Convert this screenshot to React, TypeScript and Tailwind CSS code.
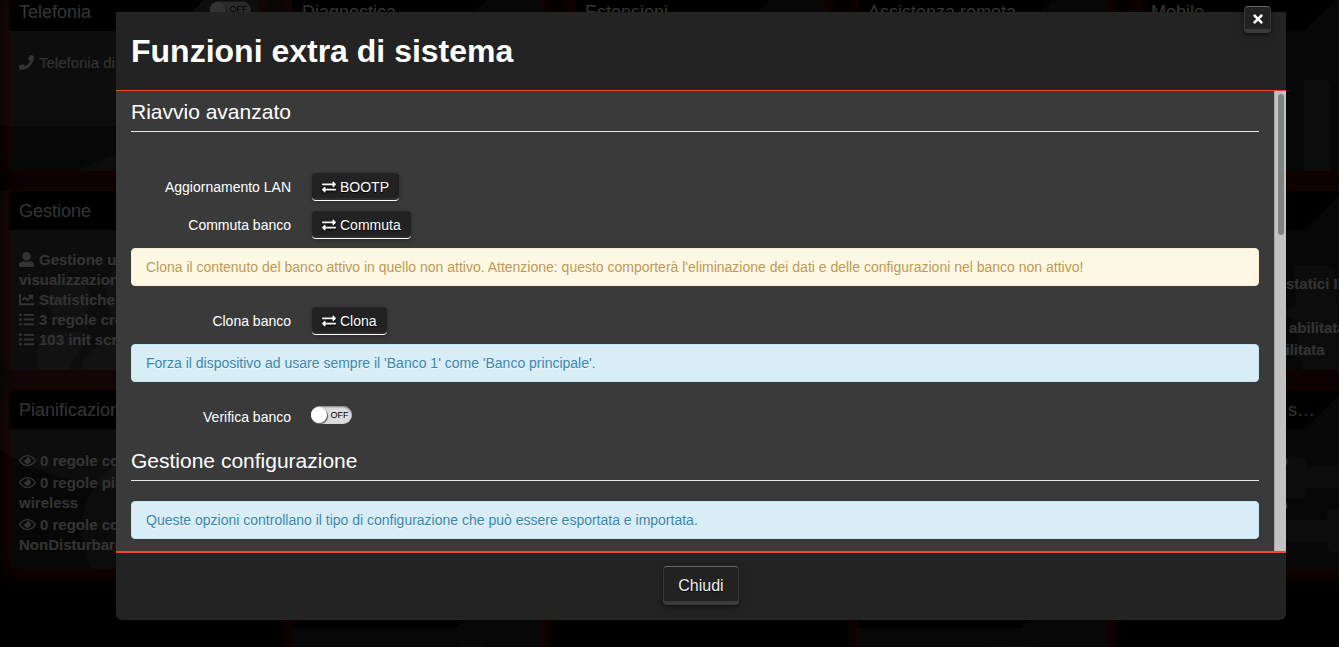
import { useState } from "react";
import type { ReactNode } from "react";
import type { IconType } from "react-icons";
import {
  FaChartLine,
  FaClock,
  FaDatabase,
  FaExchangeAlt,
  FaKey,
  FaListUl,
  FaPhone,
  FaRegEye,
  FaSignal,
  FaSlidersH,
  FaTimes,
  FaUserAlt,
  FaUsers,
} from "react-icons/fa";

type CardItem = {
  icon?: IconType
  text: string
  className?: string
}

type CardData = {
  title: string
  watermark?: IconType | typeof NetworkShape
  wide?: boolean
  toggle?: boolean
  items?: CardItem[]
  listClass?: string
}

function NetworkShape({ className }: { className?: string }) {
  return (
    <svg className={className} viewBox="0 0 211 169" fill="currentColor">
      <path d="M124 18H153Q165 18 167 32L171 169H135L133 117Q132 109 124 109H100V99H120Q129 99 129 91L128 79Q127 71 119 71H100V61H119Q127 61 127 53z" />
    </svg>
  )
}

// null keeps the cell empty
const cards: (CardData | null)[] = [
  {
    title: 'Telefonia',
    watermark: FaPhone,
    toggle: true,
    items: [{ icon: FaPhone, text: 'Telefonia disab.' }],
    listClass: 'pt-[22px]',
  },
  { title: 'Diagnostica' },
  { title: 'Estensioni' },
  { title: 'Assistenza remota' },
  { title: 'Mobile', watermark: FaSignal, wide: true },
  {
    title: 'Gestione',
    watermark: FaUsers,
    wide: true,
    items: [
      { icon: FaUserAlt, text: 'Gestione utenti e visualizzazione' },
      { icon: FaChartLine, text: 'Statistiche' },
      { icon: FaListUl, text: '3 regole cron' },
      { icon: FaListUl, text: '103 init script' },
    ],
    listClass: 'pt-5 font-bold',
  },
  { title: '' },
  { title: '' },
  { title: '' },
  {
    title: '',
    watermark: NetworkShape,
    wide: true,
    items: [
      { text: 'statici IP', className: 'pl-[135px]' },
      { text: 'abilitata', className: 'pl-[138px] mt-6' },
      { text: 'abilitata', className: 'pl-[117px] mt-0.5' },
    ],
    listClass: 'pt-11 font-bold whitespace-nowrap',
  },
  {
    title: 'Pianificazione',
    watermark: FaClock,
    items: [
      { icon: FaRegEye, text: '0 regole cond.' },
      { icon: FaRegEye, text: '0 regole pian. wireless' },
      { icon: FaRegEye, text: '0 regole cond. NonDisturbare' },
    ],
    listClass: 'pt-[22px] font-bold space-y-0.5',
  },
  { title: '' },
  { title: '' },
  { title: '' },
  {
    title: 'Gestione banda: s…',
    watermark: FaSlidersH,
    items: [
      { text: 'attivo', className: 'pl-[101px]' },
      { text: 'attivo', className: 'pl-[101px] mt-6' },
    ],
    listClass: 'pt-[22px]',
  },
  null,
  { title: '', watermark: FaKey },
  null,
  { title: '', watermark: FaDatabase },
  null,
]

function Toggle({ id, label }: { id: string; label?: string }) {
  const [checked, setChecked] = useState(false)

  return (
    <span className="relative mb-1 inline-flex h-[18px] w-[41px] items-center rounded-full bg-[#ddd] shadow-[inset_0_1px_2px_#777]">
      <input
        id={id}
        type="checkbox"
        aria-label={label}
        checked={checked}
        onChange={() => setChecked(!checked)}
        className="peer absolute inset-0 z-10 cursor-pointer appearance-none rounded-full"
      />
      <span className="size-4 shrink-0 rounded-full bg-white shadow-[1px_1px_1px_#555] peer-checked:order-2" />
      <span className="flex-1 text-center text-[9px] leading-none text-black">
        {checked ? 'ON' : 'OFF'}
      </span>
    </span>
  )
}

function Card({ card, index }: { card: CardData; index: number }) {
  const Watermark = card.watermark

  return (
    <section className="relative h-[179px] overflow-hidden rounded-sm bg-white/14 text-white">
      {Watermark && (
        <Watermark
          className={
            card.wide
              ? 'absolute right-[11px] top-14 h-[169px] w-[211px] text-white/12'
              : 'absolute right-[11px] top-14 h-[169px] w-[169px] text-white/12'
          }
        />
      )}
      <div className="relative flex h-[39px] items-center justify-between pl-2.5 pr-2">
        <svg className="absolute left-0 top-0 h-[39px] w-[203px]" viewBox="0 0 203 39">
          <path d="M0 0H203L163 39H0z" fill="#000" />
        </svg>
        <h2 className="relative text-lg">{card.title}</h2>
        {card.toggle && <Toggle id={`card-${index}`} label={card.title} />}
      </div>
      <ul className={`relative px-2.5 text-[15px] leading-5 ${card.listClass ?? ''}`}>
        {card.items?.map((item, i) => (
          <li key={i} className={item.className ?? 'w-[160px]'}>
            {item.icon && (
              <item.icon
                className={
                  item.icon === FaRegEye
                    ? 'mr-1 inline h-[15px] w-[17px] align-[-2px]'
                    : 'mr-[5px] inline size-[15px] align-[-2px]'
                }
              />
            )}
            {item.text}
          </li>
        ))}
      </ul>
    </section>
  )
}

function Dashboard() {
  return (
    <div className="absolute inset-0 overflow-hidden bg-black">
      <svg className="absolute left-0 top-0 h-full w-[300px]" fill="#242424">
        <path d="M0 0H300V126H0z" />
        <path d="M0 190H300V440Q130 530 0 450z" />
      </svg>
      <div className="relative -mt-2 ml-[9px] grid w-max grid-cols-[repeat(5,250px)] gap-x-[33px] gap-y-5">
        {cards.map((card, i) =>
          card ? (
            <div key={i} className="rounded-sm shadow-[0_0_20px_2px_#a01a14]">
              <Card card={card} index={i} />
            </div>
          ) : (
            <div key={i} />
          )
        )}
      </div>
      <div className="absolute inset-0 bg-black/80" />
    </div>
  )
}

function Legend({ children }: { children: ReactNode }) {
  return (
    <h3 className="mb-5 h-[41px] border-b border-[#e5e5e5] text-[21px] leading-[42px]">{children}</h3>
  )
}

function Row({ id, label, children }: { id: string; label: string; children: ReactNode }) {
  return (
    <div className="mb-2 flex h-[30px] items-center gap-5">
      <label htmlFor={id} className="w-40 text-right">{label}</label>
      {children}
    </div>
  )
}

function ActionButton({ id, text }: { id: string; text: string }) {
  return (
    <button
      id={id}
      type="button"
      className="m-px flex h-7 items-center gap-1 rounded border-b border-white bg-[#222] px-2.5 shadow-[inset_0_-2px_0_#2e2e2e,0_1px_4px_rgba(0,0,0,0.3)] [text-shadow:0_1px_1px_#000] hover:bg-[#2c2c2c]"
    >
      <FaExchangeAlt className="size-3.5 drop-shadow-[0_1px_1px_#000]" />
      {text}
    </button>
  )
}

function Alert({ type, children }: { type: 'warning' | 'info'; children: ReactNode }) {
  const color =
    type === 'warning'
      ? 'border-[#fbeed5] bg-[#fcf8e3] text-[#c09853]'
      : 'border-[#bce8f1] bg-[#d9edf7] text-[#3a87ad]'
  return (
    <div className={`mb-5 rounded border px-3.5 py-2 leading-5 [text-shadow:0_1px_0_rgba(255,255,255,0.5)] ${color}`}>
      {children}
    </div>
  )
}

export default function App() {
  const [open, setOpen] = useState(true)
  const close = () => setOpen(false)

  return (
    <div className="relative h-screen overflow-hidden bg-black font-['Liberation_Sans',Arial,sans-serif] text-sm text-white">
      <Dashboard />
      {open && (
        <div className="relative flex h-full pb-[27px] pl-[116px] pr-[53px] pt-3">
          <div role="dialog" aria-labelledby="modal-title" className="relative flex min-w-0 flex-1 flex-col rounded-b-md bg-[#232323]">
            <button
              type="button"
              aria-label="Chiudi finestra"
              onClick={close}
              className="absolute -top-1.5 right-[15px] flex size-[27px] items-center justify-center rounded-sm border border-b-4 border-[#3a3a3a] border-t-[#666] bg-[#222] pt-0.5 shadow-[0_2px_5px_rgba(0,0,0,0.6)]"
            >
              <FaTimes className="size-3.5" />
            </button>
            <header className="flex h-[79px] items-center border-b border-[#f44336] px-[15px] pt-0.5">
              <h1 id="modal-title" className="text-[32px] font-bold">Funzioni extra di sistema</h1>
            </header>
            <div className="flex min-h-0 flex-1 bg-[#3a3a3a]">
              <div className="min-w-0 flex-1 overflow-y-auto px-[15px] [scrollbar-width:none]">
                <Legend>Riavvio avanzato</Legend>
                <div className="pt-5">
                  <Row id="bootp" label="Aggiornamento LAN">
                    <ActionButton id="bootp" text="BOOTP" />
                  </Row>
                  <Row id="switch-bank" label="Commuta banco">
                    <ActionButton id="switch-bank" text="Commuta" />
                  </Row>
                  <Alert type="warning">
                    Clona il contenuto del banco attivo in quello non attivo. Attenzione: questo comporterà l'eliminazione dei dati e delle configurazioni nel banco non attivo!
                  </Alert>
                  <Row id="clone-bank" label="Clona banco">
                    <ActionButton id="clone-bank" text="Clona" />
                  </Row>
                  <Alert type="info">
                    Forza il dispositivo ad usare sempre il 'Banco 1' come 'Banco principale'.
                  </Alert>
                  <Row id="check-bank" label="Verifica banco">
                    <Toggle id="check-bank" />
                  </Row>
                </div>
                <Legend>Gestione configurazione</Legend>
                <Alert type="info">
                  Queste opzioni controllano il tipo di configurazione che può essere esportata e importata.
                </Alert>
              </div>
              <div className="w-3 border-l border-[#a5a5a5] bg-[#c1c3c2] pt-[3px]">
                <div className="mx-auto h-[141px] w-1.5 rounded-full bg-[#7c8282]" />
              </div>
            </div>
            <footer className="flex justify-center border-t-2 border-[#f44336] pb-[15px] pt-[13px]">
              <button
                type="button"
                onClick={close}
                className="h-[39px] rounded-sm border border-b-4 border-[#3a3a3a] border-t-[#666] bg-[#222] px-3.5 pt-1 text-base leading-none text-[#eee] shadow-[0_2px_5px_rgba(0,0,0,0.5)] [text-shadow:0_1px_1px_#000]"
              >
                Chiudi
              </button>
            </footer>
          </div>
        </div>
      )}
    </div>
  )
}
